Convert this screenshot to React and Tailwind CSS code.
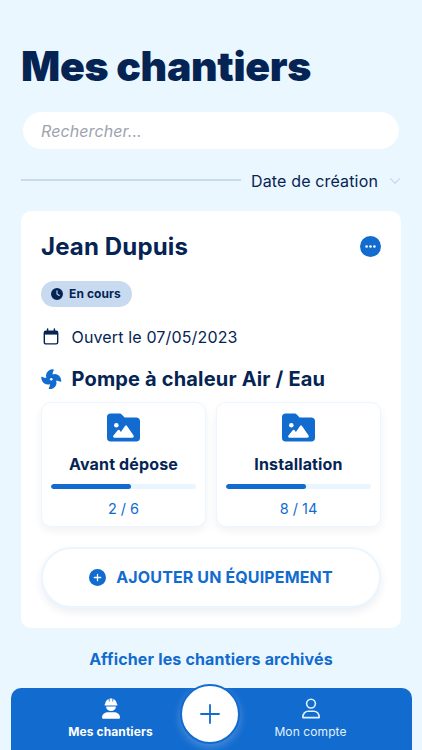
import { FaClock } from 'react-icons/fa6'
import { ChevronDown } from 'lucide-react'

const photoSteps = [
  { label: 'Avant dépose', count: '2 / 6', progress: 55 },
  { label: 'Installation', count: '8 / 14', progress: 55 },
]

const FAN_BLADE =
  'M7.6 11C4.9 9.4 4.2 6.3 5.5 3.8C6.7 1.6 9 0.4 11.4 0.2C12.4 0.1 12.7 0.8 12.2 1.6C11.2 3.3 11.2 4.8 11.8 6.6L12 11Z'

const FanIcon = () => (
  <svg viewBox="0 0 20 20" className="w-[20.5px] h-[20.5px]" fill="#126bcf">
    <path d={FAN_BLADE} />
    <path d={FAN_BLADE} transform="rotate(90 10 10)" />
    <path d={FAN_BLADE} transform="rotate(180 10 10)" />
    <path d={FAN_BLADE} transform="rotate(270 10 10)" />
    <circle cx="10" cy="10" r="1.3" fill="#fff" />
  </svg>
)

const FolderImageIcon = () => (
  <svg viewBox="0 0 33 29" className="w-[33px] h-[29px]">
    <path
      fill="#126bcf"
      d="M3.5 0.5H12.2C13.4 0.5 14.2 0.8 15 1.7L17.6 4.4H29.2C31.4 4.4 33 5.8 33 8V25C33 27.2 31.5 28.5 29.5 28.5H3.5C1.4 28.5 0 27.1 0 25V4C0 1.9 1.4 0.5 3.5 0.5Z"
    />
    <circle cx="9.3" cy="12.3" r="2.3" fill="#fff" />
    <path
      fill="#fff"
      d="M6.3 22.8L10.7 17.3Q11.7 16.2 12.6 17.3L13.9 18.9L18 12.9Q19 11.6 20 12.9L26.6 22.5Q27.4 24.5 25.5 24.7H7.3Q5.4 24.4 6.3 22.8Z"
    />
  </svg>
)

const CalendarIcon = () => (
  <svg viewBox="0 0 16 18" className="w-4 h-[18px]" fill="none">
    <path d="M4.6 1V4M11.4 1V4" stroke="#052453" strokeWidth="1.5" strokeLinecap="round" />
    <rect x="1.3" y="3.3" width="13.4" height="12.6" rx="1.6" stroke="#052453" strokeWidth="1.4" />
    <path d="M1.3 3.3H14.7V6.6H1.3Z" fill="#052453" />
  </svg>
)

const WorkerIcon = () => (
  <svg viewBox="0 0 18 21" className="w-[18px] h-[21px]" fill="#fff">
    <path d="M7.6 0.4H10.4V3.6H11.2V1.1C13.5 1.9 14.8 4 14.9 6.3H15.2Q15.5 6.3 15.5 6.7V7Q15.5 7.4 15.1 7.4H2.9Q2.5 7.4 2.5 7V6.7Q2.5 6.3 2.8 6.3H3.1C3.2 4 4.5 1.9 6.8 1.1V3.6H7.6Z" />
    <path d="M4 8.4H14C13.8 11.2 11.8 13 9 13C6.2 13 4.2 11.2 4 8.4Z" />
    <path d="M5.7 14.3H12.3C15.5 14.3 18 16.6 18 19.5Q18 20.7 16.8 20.7H1.2Q0 20.7 0 19.5C0 16.6 2.5 14.3 5.7 14.3Z" />
  </svg>
)

const UserIcon = () => (
  <svg viewBox="0 0 18 21" className="w-[18px] h-[21px]" fill="none" stroke="#e0f2fe" strokeWidth="1.6">
    <circle cx="9" cy="5.6" r="4.4" />
    <path strokeLinejoin="round" d="M6.4 13.2H11.6C14.8 13.2 17.2 15.6 17.2 19.6H0.8C0.8 15.6 3.2 13.2 6.4 13.2Z" />
  </svg>
)

const StepCard = ({ label, count, progress }) => (
  <div className="flex-1 h-[125px] flex flex-col items-center rounded-[10px] border border-[#edf6fe] bg-white px-[9px] pt-[10px] shadow-[0_4px_8px_rgba(3,34,84,0.06)]">
    <FolderImageIcon />
    <h4 className="mt-[10px] text-[16px] leading-6 font-bold tracking-[0.15px]">{label}</h4>
    <div className="mt-[8px] w-full h-[5px] rounded-full bg-[#e9f5ff] overflow-hidden">
      <div className="h-full rounded-full bg-[#126bcf]" style={{ width: `${progress}%` }} />
    </div>
    <span className="mt-[8px] text-[14.5px] leading-6 text-[#126bcf]">{count}</span>
  </div>
)

const App = () => {
  return (
    <div className="w-full h-[750px] overflow-hidden flex flex-col bg-[#eaf7ff] text-[#052453] font-['Inter',sans-serif]">
      <main className="flex-1 px-[21px] pt-[42px]">
        <h1 className="text-[41px] leading-[48px] font-black tracking-[-0.3px] whitespace-nowrap">Mes chantiers</h1>

        {/* Search */}
        <input
          type="text"
          placeholder="Rechercher..."
          className="block mt-[22px] ml-[2px] w-[376px] h-[37px] rounded-full bg-white px-[18px] text-[16px] tracking-[0.1px] italic placeholder:text-[#9ca3af] outline-none"
        />

        {/* Sort */}
        <div className="mt-[20px] h-6 flex items-center">
          <div className="w-[220px] h-[2px] -mt-[2px] bg-[#c8daf0]" />
          <span className="ml-[10px] text-[16px] leading-6 tracking-[0.15px] whitespace-nowrap">Date de création</span>
          <ChevronDown className="ml-auto w-[18px] h-[18px] -mr-[3px] text-[#c8daf0]" strokeWidth={1.6} />
        </div>

        {/* Site card */}
        <section className="mt-[18px] w-[380px] h-[417px] rounded-[10px] bg-white px-5 pt-5">
          <div className="flex items-center justify-between">
            <h2 className="pt-px text-[24px] leading-[29px] font-bold tracking-[0.15px]">Jean Dupuis</h2>
            <button className="w-[21px] h-[21px] rounded-full bg-[#126bcf] flex items-center justify-center">
              <svg viewBox="0 0 21 21" className="w-[21px] h-[21px]" fill="#fff">
                <circle cx="6.6" cy="10.5" r="1.3" />
                <circle cx="10.5" cy="10.5" r="1.3" />
                <circle cx="14.4" cy="10.5" r="1.3" />
              </svg>
            </button>
          </div>

          <div className="mt-5 w-[91px] h-[26px] rounded-full bg-[#c8daf0] flex items-center pl-[10px] gap-[6px]">
            <FaClock className="w-[12px] h-[12px]" />
            <span className="text-[12px] leading-4 font-bold tracking-[0.1px] whitespace-nowrap">En cours</span>
          </div>

          <div className="mt-[18px] h-6 flex items-center">
            <div className="w-[30.5px] pl-[2px]">
              <CalendarIcon />
            </div>
            <span className="text-[16px] tracking-[0.15px]">Ouvert le 07/05/2023</span>
          </div>

          <div className="mt-[16px] h-[28px] flex items-center">
            <div className="w-[30.5px]">
              <FanIcon />
            </div>
            <h3 className="text-[20px] font-bold tracking-[0.17px] whitespace-nowrap">Pompe à chaleur Air / Eau</h3>
          </div>

          <div className="mt-[9px] flex gap-[10px]">
            {photoSteps.map((step) => (
              <StepCard key={step.label} {...step} />
            ))}
          </div>

          <button className="mt-[20px] w-full h-[61px] pb-px rounded-full border-2 border-[#e9f5ff] bg-white flex items-center justify-center gap-[10px] text-[#126bcf] shadow-[0_4px_8px_rgba(3,34,84,0.08)]">
            <svg viewBox="0 0 17 17" className="w-[17px] h-[17px]">
              <circle cx="8.5" cy="8.5" r="8.5" fill="#126bcf" />
              <path d="M8.5 5.3V11.7M5.3 8.5H11.7" stroke="#fff" strokeWidth="1.3" strokeLinecap="round" />
            </svg>
            <span className="text-[16px] font-bold tracking-[0.13px] whitespace-nowrap">AJOUTER UN ÉQUIPEMENT</span>
          </button>
        </section>

        <a href="#" className="mt-[19px] block text-center text-[16px] leading-6 font-bold tracking-[0.16px] text-[#126bcf]">
          Afficher les chantiers archivés
        </a>
      </main>

      {/* Bottom navigation */}
      <nav className="relative mx-[10.5px] h-[62px] flex rounded-t-[10px] bg-[#126bcf]">
        <a href="#" className="w-[200px] pt-[10px] flex flex-col items-center text-white">
          <WorkerIcon />
          <span className="mt-[5px] text-[12px] leading-4 font-bold tracking-[0.1px]">Mes chantiers</span>
        </a>
        <a href="#" className="w-[200px] pt-[10px] flex flex-col items-center text-[#e0f2fe]">
          <UserIcon />
          <span className="mt-[5px] text-[12px] leading-4 tracking-[0.1px]">Mon compte</span>
        </a>
        <button className="absolute left-[169px] -top-[4px] w-[60px] h-[60px] rounded-full border-2 border-[#126bcf] bg-white flex items-center justify-center shadow-[0_3px_8px_rgba(255,255,255,0.25)]">
          <svg viewBox="0 0 20 20" className="w-5 h-5" stroke="#126bcf" strokeWidth="1.8" strokeLinecap="round">
            <path d="M10 1V19M1 10H19" />
          </svg>
        </button>
      </nav>
    </div>
  )
}

export default App
